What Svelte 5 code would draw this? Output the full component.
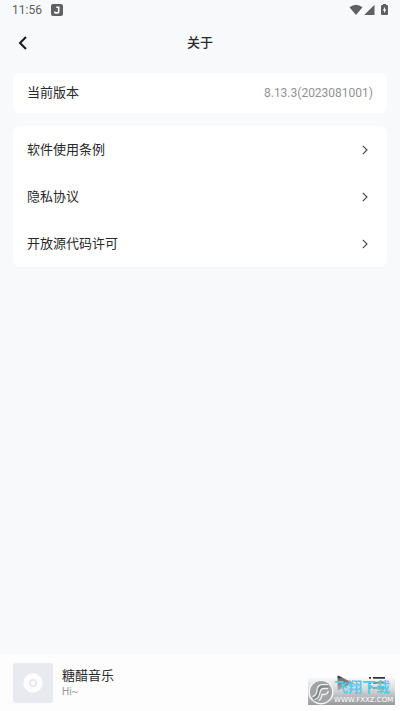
<script lang="ts">
  const time = '11:56';
  const version = '8.13.3(2023081001)';
  const links = ['软件使用条例', '隐私协议', '开放源代码许可'];
</script>

<div class="screen">
  <div class="status-bar">
    <span class="time">{time}</span>
    <svg class="app-badge" width="12" height="12" viewBox="0 0 12 12" aria-hidden="true">
      <rect width="12" height="12" rx="2" fill="#606062" />
      <path d="M5.2 3.2H7.7V7.2Q7.7 8.9 6 8.9H4.8Q3.6 8.9 3.6 7.4" fill="none" stroke="#fff" stroke-width="1.6" />
    </svg>
    <div class="signals">
      <svg width="14" height="12" viewBox="0 0 14 12" aria-hidden="true">
        <path d="M.5 3.2Q7-1.8 13.5 3.2L7 11Z" fill="#606062" />
      </svg>
      <svg width="11" height="12" viewBox="0 0 11 12" aria-hidden="true">
        <path d="M10.5 .7V11H.2Z" fill="#606062" />
      </svg>
      <svg class="battery" width="7" height="12" viewBox="0 0 7 12" aria-hidden="true">
        <path d="M2 0H5V1H6Q7 1 7 2V10Q7 11 6 11H1Q0 11 0 10V2Q0 1 1 1H2Z" fill="#606062" />
        <path d="M4 2.7L1.8 6.4H3.1V9.2L5.3 5.4H4Z" fill="#fff" />
      </svg>
    </div>
  </div>

  <header class="nav-bar">
    <button class="back" aria-label="返回">
      <svg width="10" height="14" viewBox="0 0 10 14" aria-hidden="true">
        <path d="M8 1L2 7L8 13" fill="none" stroke="#18181a" stroke-width="2" />
      </svg>
    </button>
    <h1>关于</h1>
  </header>

  <main>
    <section class="card version">
      <span>当前版本</span>
      <span class="value">{version}</span>
    </section>

    <nav class="card">
      {#each links as label}
        <a class="row" href="#about">
          <span>{label}</span>
          <svg width="6" height="10" viewBox="0 0 6 10" aria-hidden="true">
            <path d="M.8 .8L5 5L.8 9.2" fill="none" stroke="#424244" stroke-width="1.1" />
          </svg>
        </a>
      {/each}
    </nav>
  </main>

  <footer class="player">
    <div class="cover">
      <svg width="20" height="20" viewBox="0 0 20 20" aria-hidden="true">
        <circle cx="10" cy="10" r="9.7" fill="#fdfdfe" />
        <circle cx="10" cy="10" r="3.2" fill="none" stroke="#e7e7ee" stroke-width="1.8" />
      </svg>
    </div>
    <div class="track">
      <span class="title">糖醋音乐</span>
      <span class="artist">Hi~</span>
    </div>
    <button class="control play" aria-label="播放">
      <svg width="16" height="16" viewBox="0 0 16 16" aria-hidden="true">
        <path d="M1 1L15 8L1 15Z" fill="#303336" stroke="#303336" stroke-linejoin="round" />
      </svg>
    </button>
    <button class="control" aria-label="播放列表">
      <svg width="16" height="14" viewBox="0 0 16 14" aria-hidden="true">
        <path d="M0 2H2M4 2H16M0 7H2M4 7H16M0 12H2M4 12H16" fill="none" stroke="#303033" stroke-width="1.8" />
      </svg>
    </button>

    <div class="watermark">
      <svg width="26" height="26" viewBox="0 0 26 26" aria-hidden="true">
        <circle cx="13" cy="13" r="11.8" fill="#a2a3a5" stroke="#f4f4f4" stroke-width="1.5" />
        <path d="M5.5 19.5Q10 19 10.5 12Q11 6.5 16 6.5H20.5" fill="none" stroke="#808284" stroke-width="4.5" />
        <path d="M4.5 17.5Q8.5 17 9 11Q9.5 5.5 15 5.5H20.5M6.5 20.5Q11 19.5 12 13.5Q12.5 9.5 16 9.5H20M11 21.5Q13.5 20 14 15.5H17Q19.5 15 20.5 12" fill="none" stroke="#eeeeef" stroke-width="1.4" />
      </svg>
      <div class="mark-text">
        <span class="mark-name">飞翔下载</span>
        <span class="mark-url">WWW.FXXZ.COM</span>
      </div>
    </div>
  </footer>
</div>

<style>
  :global(body) {
    margin: 0;
    background: #f7f9fb;
  }

  .screen {
    display: flex;
    flex-direction: column;
    min-height: 100vh;
    background: #f7f9fb;
    color: #29292b;
    font-family: Roboto, 'Noto Sans CJK SC', sans-serif;
    font-size: 13px;
    line-height: 20px;
  }

  .status-bar {
    display: flex;
    align-items: center;
    height: 20px;
    padding: 0 12px;
    color: #606062;
  }

  .time {
    font-size: 12px;
  }

  .app-badge {
    margin-left: 9px;
  }

  .signals {
    display: flex;
    align-items: center;
    gap: 1px;
    margin-left: auto;
  }

  .battery {
    margin-left: 5px;
  }

  .nav-bar {
    display: grid;
    grid-template-columns: 46px 1fr 46px;
    align-items: center;
    height: 46px;
  }

  button {
    display: flex;
    align-items: center;
    justify-content: center;
    padding: 0;
    border: 0;
    background: none;
    cursor: pointer;
  }

  .back {
    height: 46px;
  }

  h1 {
    margin: 0;
    font-size: 13px;
    font-weight: 500;
    text-align: center;
  }

  main {
    flex: 1;
    padding: 7px 13px;
  }

  .card {
    border-radius: 7px;
    background: #fff;
  }

  .version {
    display: flex;
    align-items: center;
    justify-content: space-between;
    height: 40px;
    margin-bottom: 13px;
    padding: 0 14px;
  }

  .value {
    color: #929294;
    font-size: 12px;
  }

  .row {
    display: flex;
    align-items: center;
    justify-content: space-between;
    height: 47px;
    padding: 0 19px 0 14px;
    color: inherit;
    text-decoration: none;
  }

  .player {
    position: relative;
    display: flex;
    align-items: center;
    height: 57px;
    padding: 0 15px 0 13px;
    background: #fdfdfd;
  }

  .cover {
    display: flex;
    align-items: center;
    justify-content: center;
    width: 40px;
    height: 40px;
    border-radius: 3px;
    background: #e9eaf0;
  }

  .track {
    display: flex;
    flex: 1;
    flex-direction: column;
    margin-left: 9px;
  }

  .title {
    line-height: 18px;
  }

  .artist {
    color: #98989b;
    font-size: 10px;
    line-height: 14px;
  }

  .control {
    width: 16px;
    height: 24px;
  }

  .play {
    margin-right: 16px;
  }

  .watermark {
    position: absolute;
    right: 5px;
    bottom: 6px;
    display: flex;
    align-items: center;
    width: 87px;
    height: 27px;
    background: linear-gradient(rgba(232, 232, 232, 0.3), rgba(205, 206, 208, 0.75) 40%, rgba(145, 147, 150, 0.95));
  }

  .mark-text {
    display: flex;
    flex: 1;
    flex-direction: column;
    white-space: nowrap;
  }

  .mark-name {
    color: #50cdec;
    font-size: 14px;
    font-weight: 700;
    line-height: 17px;
  }

  .mark-url {
    color: #fff;
    font-family: 'DejaVu Sans', sans-serif;
    font-size: 7px;
    line-height: 9px;
  }
</style>
